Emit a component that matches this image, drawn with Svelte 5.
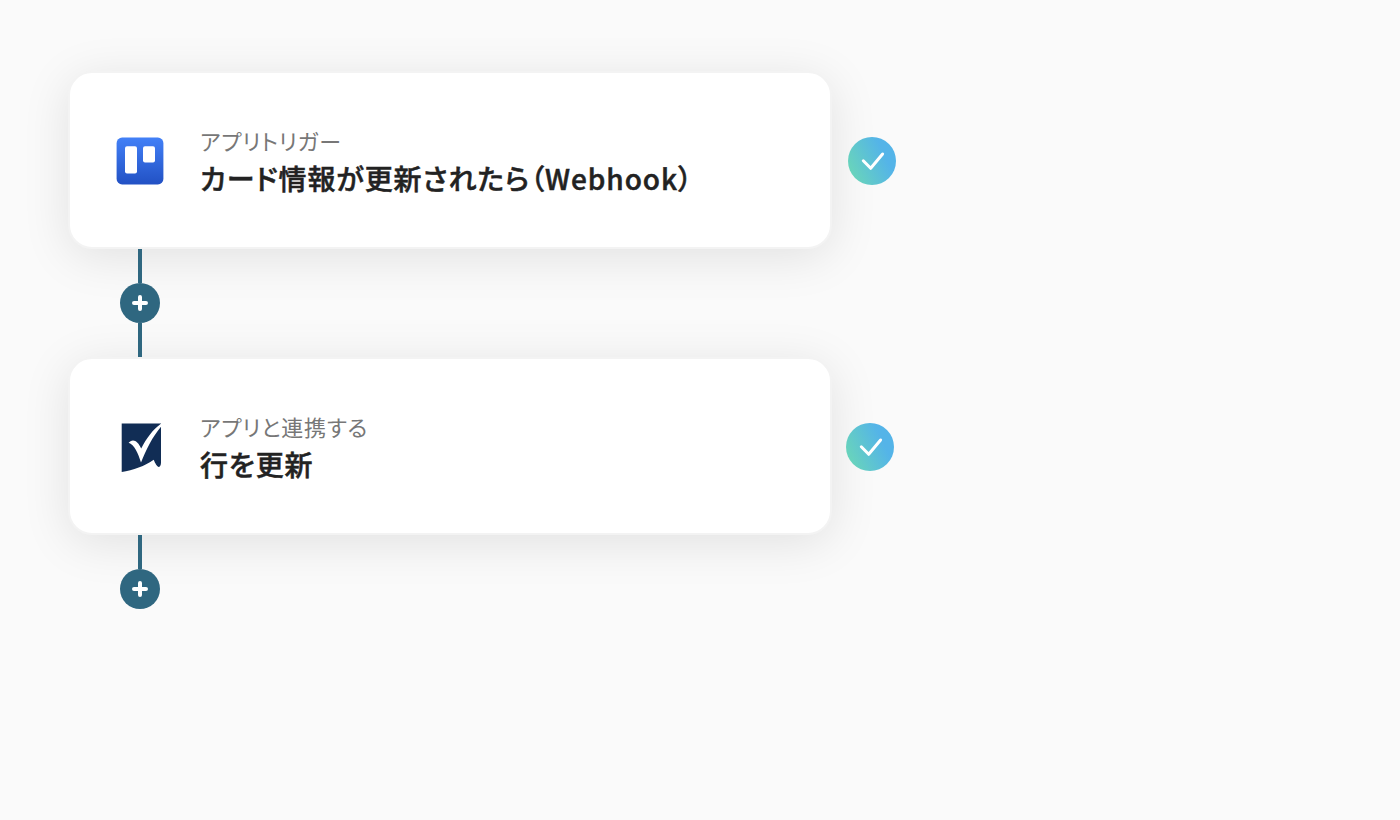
<script>
	const steps = [
		{ id: 1, app: 'trello', label: 'アプリトリガー', title: 'カード情報が更新されたら（Webhook）', last: false },
		{ id: 2, app: 'smartsheet', label: 'アプリと連携する', title: '行を更新', last: true }
	];
</script>

<main class="flow">
	{#each steps as step (step.id)}
		<div class="step-row">
			<section class="card">
				<div class="app-icon">
					{#if step.app === 'trello'}
						<svg width="48" height="48" viewBox="0 0 48 48">
							<defs>
								<linearGradient id="trello-bg" x1="0" y1="0" x2="0" y2="1">
									<stop offset="0" stop-color="#4280f7" />
									<stop offset="1" stop-color="#2251c4" />
								</linearGradient>
							</defs>
							<rect x="0.6" y="0.6" width="46.8" height="46.8" rx="5.5" fill="url(#trello-bg)" />
							<rect x="9" y="9.2" width="12" height="27.2" rx="2" fill="#fff" />
							<rect x="27" y="9.2" width="12" height="16.4" rx="2" fill="#fff" />
						</svg>
					{:else}
						<svg width="48" height="52" viewBox="0 0 48 52">
							<path
								d="M5.7 2.4H45V41.5C45 44 44.2 45.8 42.9 45.9C41.2 46 39.2 42.5 37.7 38.8C29 44.8 17 49.6 5.7 51.1Z"
								fill="#112d55"
							/>
							<path
								d="M45.2 2.4C36.8 8.5 30.5 17 25.2 27.5C22.9 22.6 20.2 19.5 17 19.5C15.2 19.6 13.8 20.7 12.6 21.8C18.3 23.6 21.9 31.8 25 41.6C29.8 29.6 36.5 15.6 45.2 5.6Z"
								fill="#fff"
							/>
						</svg>
					{/if}
				</div>
				<div class="text">
					<p class="label">{step.label}</p>
					<h2 class="title">{step.title}</h2>
				</div>
			</section>
			<span class="status" class:last={step.last}>
				<svg width="48" height="48" viewBox="0 0 48 48">
					<path d="M15.3 23.8L22.7 31.3L34.6 17" />
				</svg>
			</span>
		</div>
		<div class="connector">
			<span class="line"></span>
			<span class="add">
				<svg width="16" height="16" viewBox="0 0 16 16">
					<path d="M8 2V14M2 8H14" />
				</svg>
			</span>
			{#if !step.last}
				<span class="line"></span>
			{/if}
		</div>
	{/each}
</main>

<style>
	:global(body) {
		margin: 0;
		background: #fafafa;
	}

	.flow {
		box-sizing: border-box;
		height: 820px;
		padding: 71px 68px 0;
		font-family: 'Noto Sans CJK JP', sans-serif;
		font-feature-settings: 'palt';
	}

	.step-row {
		display: flex;
		align-items: center;
	}

	.card {
		box-sizing: border-box;
		display: flex;
		align-items: center;
		width: 764px;
		height: 178px;
		padding: 2px 46px 0;
		border: 2px solid #f3f3f3;
		border-radius: 24px;
		background: #fff;
		box-shadow: 0 8px 48px rgba(0, 0, 0, 0.1);
	}

	.app-icon {
		display: flex;
		justify-content: center;
		width: 48px;
		margin-right: 36px;
	}

	.label,
	.title {
		margin: 0;
		white-space: nowrap;
	}

	.label {
		color: #777;
		font-size: 22px;
		line-height: 32px;
		letter-spacing: 0.036em;
	}

	.title {
		color: #222;
		font-size: 28px;
		font-weight: 500;
		line-height: 42px;
		letter-spacing: 0.033em;
		padding-top: 1px;
		/* semi-bold, between the medium and bold cuts */
		-webkit-text-stroke: 0.5px #222;
	}

	.status {
		display: flex;
		width: 48px;
		height: 48px;
		margin-top: 2px;
		margin-left: 16px;
		border-radius: 50%;
		background: linear-gradient(65deg, #6ad6b8 8%, #54b4e8 72%);
		z-index: 1;
	}

	.status.last {
		margin-left: 14px;
	}

	.status path {
		fill: none;
		stroke: #fff;
		stroke-width: 3;
		stroke-linecap: round;
		stroke-linejoin: round;
	}

	.connector {
		position: relative;
		display: flex;
		flex-direction: column;
		align-items: center;
		width: 40px;
		margin-left: 52px;
	}

	.line {
		width: 4px;
		height: 34px;
		background: #2f6780;
	}

	.add {
		display: flex;
		align-items: center;
		justify-content: center;
		width: 40px;
		height: 40px;
		border-radius: 50%;
		background: #2f6780;
	}

	.add path {
		stroke: #fff;
		stroke-width: 4;
		stroke-linecap: round;
	}
</style>
